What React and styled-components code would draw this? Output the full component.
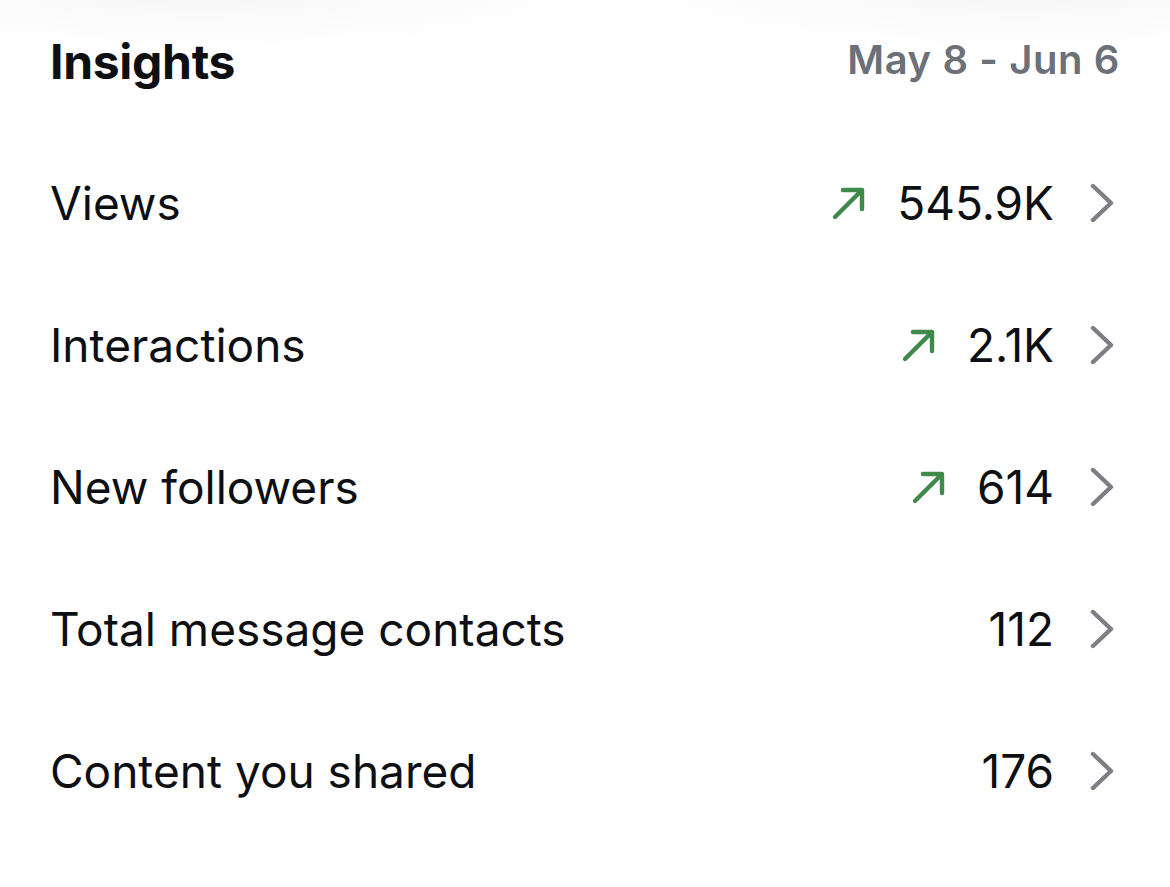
import styled, { createGlobalStyle } from "styled-components";

const GlobalStyle = createGlobalStyle`
  html, body {
    margin: 0;
    padding: 0;
    background: #ffffff;
  }
  body {
    font-family: Inter, "Noto Sans", sans-serif;
    -webkit-font-smoothing: antialiased;
  }
`;

const Page = styled.div`
  width: 1170px;
  height: 887px;
  box-sizing: border-box;
  padding: 0 50px;
  background:
    radial-gradient(ellipse 420px 60px at 200px -10px, rgba(0, 0, 0, 0.035), transparent),
    radial-gradient(ellipse 420px 60px at 1020px -10px, rgba(0, 0, 0, 0.035), transparent),
    #ffffff;
  overflow: hidden;
`;

const Header = styled.div`
  display: flex;
  align-items: center;
  justify-content: space-between;
  height: 122px;
`;

const Title = styled.h1`
  margin: 0;
  font-size: 48px;
  font-weight: 700;
  color: #0d0f12;
  letter-spacing: -0.3px;
`;

const DateRange = styled.span`
  font-size: 40px;
  font-weight: 600;
  letter-spacing: 0.6px;
  color: #6b7079;
  margin-top: -4px;
`;

const List = styled.div`
  display: flex;
  flex-direction: column;
  margin-top: 10px;
  padding-right: 5px;
`;

const Row = styled.div`
  display: flex;
  align-items: center;
  justify-content: space-between;
  height: 142px;
`;

const Label = styled.span`
  font-size: 46px;
  font-weight: 400;
  color: #0d0f12;
`;

const Right = styled.div`
  display: flex;
  align-items: center;
`;

const Trend = styled.svg`
  width: 36px;
  height: 36px;
  margin-right: 30px;
`;

const Value = styled.span`
  font-size: 46px;
  font-weight: 400;
  color: #0d0f12;
`;

const Chevron = styled.svg`
  width: 26px;
  height: 40px;
  margin-left: 35px;
`;

const rows = [
  { label: "Views", value: "545.9K", up: true },
  { label: "Interactions", value: "2.1K", up: true },
  { label: "New followers", value: "614", up: true },
  { label: "Total message contacts", value: "112" },
  { label: "Content you shared", value: "176" },
];

function UpArrow() {
  return (
    <Trend viewBox="0 0 36 36" fill="none">
      <path
        d="M4 32 L31 5 M12 5 H31 V24"
        stroke="#3f8a4a"
        strokeWidth="4.4"
        strokeLinecap="round"
        strokeLinejoin="round"
      />
    </Trend>
  );
}

function InsightRow({ label, value, up }) {
  return (
    <Row>
      <Label>{label}</Label>
      <Right>
        {up && <UpArrow />}
        <Value>{value}</Value>
        <Chevron viewBox="0 0 26 40" fill="none">
          <path
            d="M4 3 L22 20 L4 37"
            stroke="#7c7f85"
            strokeWidth="4.4"
            strokeLinecap="round"
            strokeLinejoin="round"
          />
        </Chevron>
      </Right>
    </Row>
  );
}

export default function App() {
  return (
    <>
      <GlobalStyle />
      <Page>
        <Header>
          <Title>Insights</Title>
          <DateRange>May 8 - Jun 6</DateRange>
        </Header>
        <List>
          {rows.map((r) => (
            <InsightRow key={r.label} {...r} />
          ))}
        </List>
      </Page>
    </>
  );
}
